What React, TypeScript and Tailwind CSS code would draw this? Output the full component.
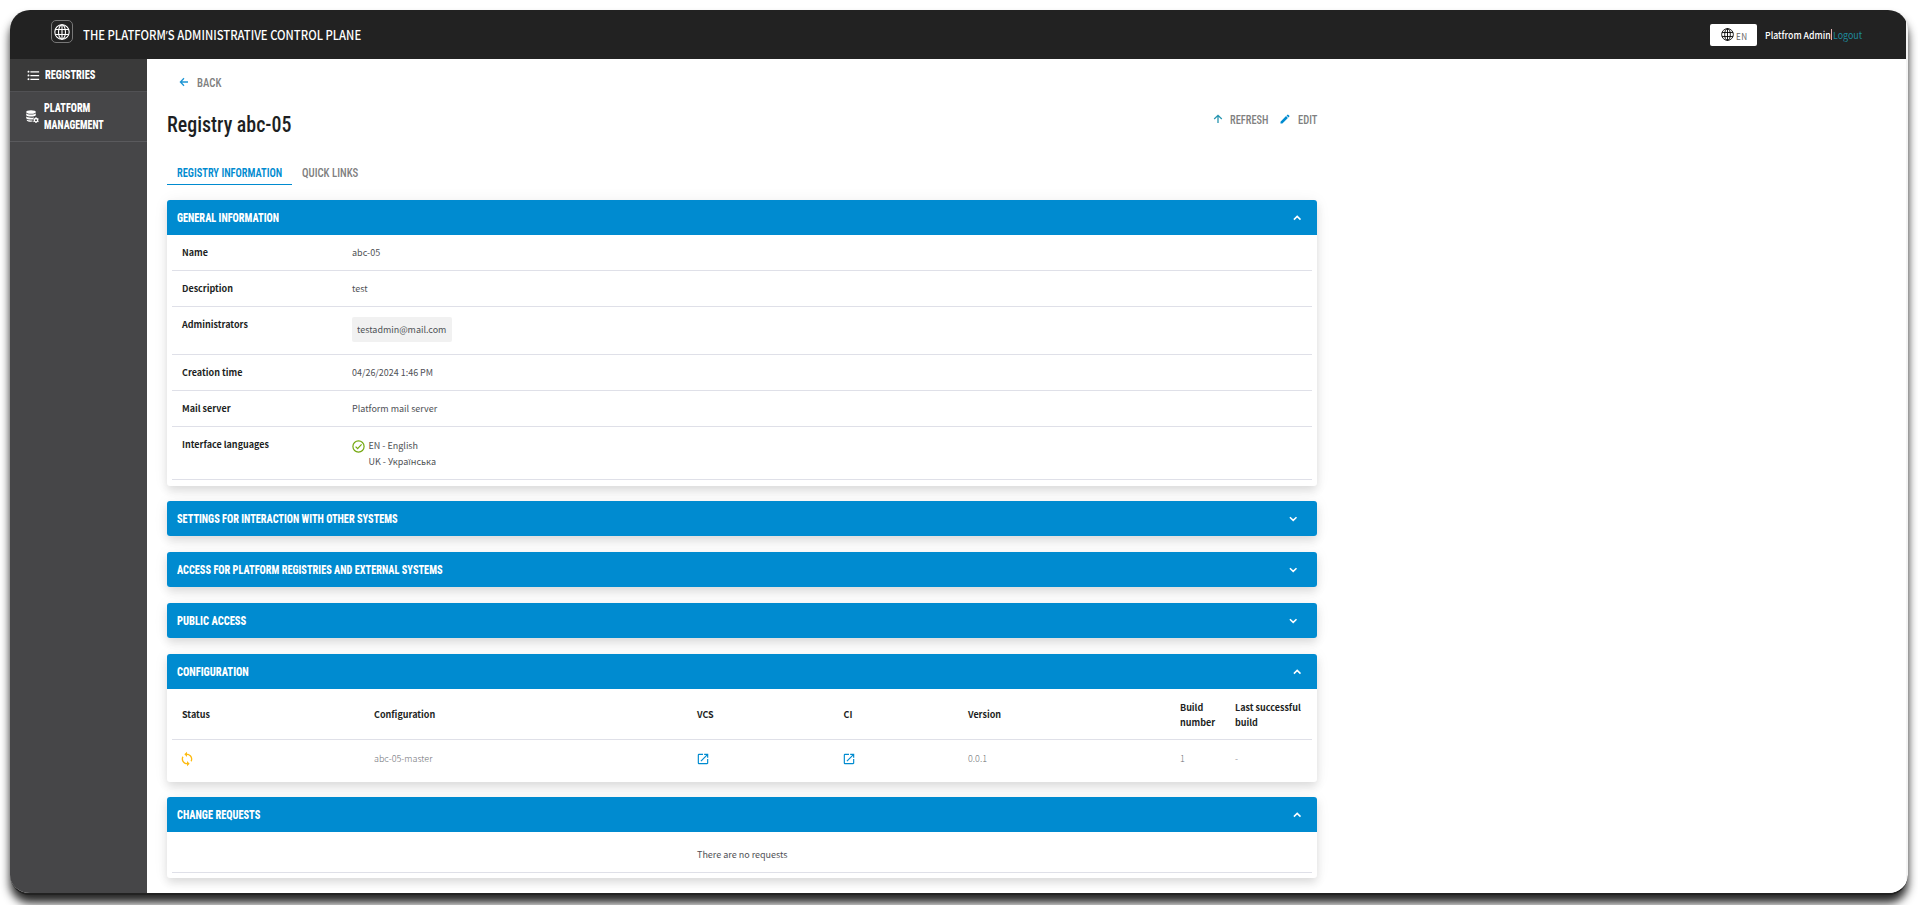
import { useLayoutEffect, useRef, useState, type ReactNode } from "react";
import { MdEdit, MdFormatListBulleted, MdOpenInNew, MdSync } from "react-icons/md";

/** Text condensed horizontally so that it occupies `w` pixels. */
function Narrow({ w, className = "", children }: { w: number; className?: string; children: ReactNode }) {
  const ref = useRef<HTMLSpanElement>(null);
  const [scale, setScale] = useState(1);
  useLayoutEffect(() => {
    if (ref.current) setScale(w / ref.current.offsetWidth);
  }, [w]);
  return (
    <span className={`block shrink-0 whitespace-nowrap ${className}`} style={{ width: w }}>
      <span ref={ref} className="inline-block origin-left" style={{ transform: `scaleX(${scale})` }}>
        {children}
      </span>
    </span>
  );
}

const oswald = "font-['Roboto_Condensed','Roboto',sans-serif]";

function Chevron({ up }: { up?: boolean }) {
  return (
    <svg width="12" height="12" viewBox="0 0 12 12" fill="none" stroke="white" strokeWidth="1.5">
      <path d={up ? "M2.900 7.600 6.200 4.400 9.500 7.600" : "M2.900 4.200 6.200 7.400 9.500 4.200"} />
    </svg>
  );
}

function Arrow({ className = "" }: { className?: string }) {
  return (
    <svg width="12" height="12" viewBox="0 0 12 12" fill="none" stroke="currentColor" strokeWidth="1.3" className={className}>
      <path d="M10 6H2.700M6 2.200 2.400 6 6 9.800" />
    </svg>
  );
}

function Panel({ title, w, open, children, className = "" }: {
  title: string;
  w: number;
  open?: boolean;
  children?: ReactNode;
  className?: string;
}) {
  return (
    <section className={`rounded-[3px] bg-white shadow-[0_5px_9px_rgba(0,0,0,0.11),0_1px_16px_rgba(0,0,0,0.06)] ${className}`}>
      <header
        className={`flex h-[35px] items-center justify-between bg-[#008bd0] pl-[10px] text-white ${
          open ? "rounded-t-[3px] pr-[14px]" : "rounded-[3px] pr-[18px]"
        }`}
      >
        <Narrow w={w} className={`${oswald} pb-px text-[13.500px] leading-[20px] font-extrabold`}>{title}</Narrow>
        <Chevron up={open} />
      </header>
      {children}
    </section>
  );
}

function InfoRow({ label, height, children }: { label: string; height: string; children: ReactNode }) {
  return (
    <div className={`flex border-b border-[#dfe0e8] pl-[10px] ${height}`}>
      <div className="w-[170px] pt-[10px] font-bold text-[#1d1f23]">{label}</div>
      <div className="pt-[10px] text-[#4f5156]">{children}</div>
    </div>
  );
}

function CheckCircle() {
  return (
    <svg width="13" height="13" viewBox="0 0 13 13" fill="none" stroke="#74a80f" strokeWidth="1.2">
      <circle cx="6.5" cy="6.5" r="5.6" />
      <path d="M3.6 6.7 5.6 8.7 9.6 4.4" />
    </svg>
  );
}

function Globe({ size, line }: { size: number; line: number }) {
  return (
    <svg width={size} height={size} viewBox="0 0 16 16" fill="none" stroke="currentColor" strokeWidth={line} className="shrink-0">
      <circle cx="8" cy="8" r="7.2" />
      <ellipse cx="8" cy="8" rx="3.500" ry="7.200" />
      <path d="M8 .8v14.400M1.300 5.500h13.400M1.300 10.500h13.400" />
    </svg>
  );
}

function DatabaseCog() {
  return (
    <svg width="13" height="13" viewBox="0 0 13 13" fill="white">
      <ellipse cx="5" cy="2" rx="4.8" ry="1.8" />
      <path d="M.2 3.2C1 4.9 9 4.9 9.8 3.2v2C9 7 1 7 .2 5.200z" />
      <path d="M.2 6.300C1 8 7 8 8.200 7.200L6.700 9.400C4 9.700 .8 9.400 .2 8.200z" />
      <path d="M.8 9.600C2 10.500 4.500 10.600 6.300 10.400L6.800 11.600C4 12 1.300 11.400 .8 10.500z" />
      <circle cx="10" cy="10.200" r="1.700" fill="none" stroke="white" strokeWidth="1.300" />
      <path d="M10 7.300v1M10 12v1M7.500 8.700l.9.500M11.600 11.200l.9.500M7.500 11.700l.9-.5M11.600 9.200l.9-.5" stroke="white" strokeWidth="1.100" />
    </svg>
  );
}

const grid = "grid grid-cols-[192px_323px_146.500px_124.500px_212px_55px_1fr] pl-[10px] items-center";

export default function App() {
  return (
    <div className="h-[905px] w-[1918px] overflow-hidden bg-white pt-[10px] pl-[10px] font-['Noto_Sans_CJK_SC',sans-serif] text-[9px] leading-[16px]">
      <div className="flex h-[885px] w-[1898px] flex-col overflow-hidden rounded-[20px] border-b-2 border-[#222] bg-[#f4f4f4] shadow-[0_8px_10px_rgba(0,0,0,0.85)]">
        <header className="flex h-[49px] w-[1896px] shrink-0 items-center bg-[#222] pr-[43px] text-white">
          <div className="mt-[-6px] ml-[41px] flex h-[23px] w-[22px] items-center justify-center rounded-[5px] border border-[#777]">
            <Globe size={16} line={1.1} />
          </div>
          <Narrow w={278} className="ml-[10px] pt-[2px] text-[12.500px] leading-[20px] font-medium">
            THE PLATFORM<span className="font-['Open_Sans',sans-serif]">’</span>S ADMINISTRATIVE CONTROL PLANE
          </Narrow>
          <div className="ml-auto flex h-[22px] w-[47px] items-center rounded-[2px] bg-white pl-[11px] text-black">
            <Globe size={13} line={1.1} />
            <Narrow w={11.5} className="ml-[2px] pt-[2px] text-[8.500px] tracking-[0.500px] text-[#666]">EN</Narrow>
          </div>
          <Narrow w={66} className="ml-[8px] pt-px text-[9.500px] font-medium">Platfrom Admin</Narrow>
          <span className="mr-px h-[11px] w-px bg-[#e6b0b0]" />
          <Narrow w={29} className="mr-px pt-px text-[9.500px] text-[#1f8a9e]">Logout</Narrow>
        </header>

        <div className="flex min-h-0 flex-1">
          <nav className={`flex w-[137px] shrink-0 flex-col bg-[#464648] text-[13.500px] leading-[17px] font-extrabold text-white ${oswald}`}>
            <div className="flex h-[33px] items-center border-b border-[#515154] bg-[#3a3a3a] pl-[16px]">
              <MdFormatListBulleted size={15} />
              <Narrow w={50.5} className="ml-[4px] pb-[2px]">REGISTRIES</Narrow>
            </div>
            <div className="flex h-[50px] items-center border-b border-[#5a5a5d] pl-[16px]">
              <DatabaseCog />
              <div className="ml-[5px] pb-px">
                <Narrow w={46}>PLATFORM</Narrow>
                <Narrow w={60}>MANAGEMENT</Narrow>
              </div>
            </div>
          </nav>

          <main className="flex w-[1759px] flex-col bg-white pl-[20px]">
            <div className={`mt-[13px] flex h-[20px] items-center pl-[11px] text-[13.500px] font-medium text-[#808080] ${oswald}`}>
              <Arrow className="text-[#1c95d4]" />
              <Narrow w={24} className="ml-[6.500px]">BACK</Narrow>
            </div>

            <div className={`mt-[12px] flex h-[40px] w-[1150px] justify-between ${oswald}`}>
              <h1 className="flex h-[40px] items-center pb-px text-[22.500px] leading-[30px] font-medium text-[#1d1f23]">
                <Narrow w={124}>Registry abc-05</Narrow>
              </h1>
              <div className="mt-[5px] flex h-[20px] items-center text-[13.500px] font-medium text-[#808080]">
                <Arrow className="rotate-90 text-[#2795b0]" />
                <Narrow w={38.5} className="ml-[6px] pb-px">REFRESH</Narrow>
                <MdEdit size={12} className="ml-[11px] text-[#008bd0]" />
                <Narrow w={19.5} className="ml-[6.500px] pb-px">EDIT</Narrow>
              </div>
            </div>

            <div className={`mt-[18px] flex h-[23px] text-[13.500px] leading-[20px] font-medium text-[#808080] ${oswald}`}>
              <div className="border-b border-[#008bd0] px-[10px] font-semibold text-[#008bd0]">
                <Narrow w={105}>REGISTRY INFORMATION</Narrow>
              </div>
              <Narrow w={56} className="ml-[10px]">QUICK LINKS</Narrow>
            </div>

            <div className="mt-[15px] flex w-[1150px] flex-col">
              <Panel title="GENERAL INFORMATION" w={102} open>
                <div className="px-[5px] pb-[6px]">
                  <InfoRow label="Name" height="h-[36px]">abc-05</InfoRow>
                  <InfoRow label="Description" height="h-[36px]">test</InfoRow>
                  <InfoRow label="Administrators" height="h-[48px]">
                    <div className="flex h-[25px] items-center rounded-[2px] bg-[#f1f1f1] px-[5px]">
                      <Narrow w={89.5}>testadmin@mail.com</Narrow>
                    </div>
                  </InfoRow>
                  <InfoRow label="Creation time" height="h-[36px]">
                    <Narrow w={81.5}>04/26/2024 1:46 PM</Narrow>
                  </InfoRow>
                  <InfoRow label="Mail server" height="h-[36px]">Platform mail server</InfoRow>
                  <InfoRow label="Interface languages" height="h-[53px]">
                    <div className="mt-[1px] flex items-center">
                      <span className="w-[16.500px]"><CheckCircle /></span>EN - English
                    </div>
                    <div className="pl-[16.500px]">UK - Українська</div>
                  </InfoRow>
                </div>
              </Panel>
              <Panel title="SETTINGS FOR INTERACTION WITH OTHER SYSTEMS" w={221} className="mt-[15px]" />
              <Panel title="ACCESS FOR PLATFORM REGISTRIES AND EXTERNAL SYSTEMS" w={265.5} className="mt-[16px]" />
              <Panel title="PUBLIC ACCESS" w={69.5} className="mt-[16px]" />
              <Panel title="CONFIGURATION" w={71.5} open className="mt-[16px]">
                <div className="px-[5px]">
                  <div className={`h-[51px] border-b border-[#dfe0e8] pt-px leading-[15px] font-bold text-[#1d1f23] ${grid}`}>
                    <span>Status</span>
                    <span>Configuration</span>
                    <span>VCS</span>
                    <span>CI</span>
                    <span>Version</span>
                    <span>Build<br />number</span>
                    <span>Last successful<br />build</span>
                  </div>
                  <div className={`h-[42px] pb-[4px] font-light text-[#6d6f75] ${grid}`}>
                    <MdSync size={16} className="-ml-[3px] text-[#fdbb11]" />
                    <span>abc-05-master</span>
                    <MdOpenInNew size={14} className="-ml-[1.500px] text-[#008bd0]" />
                    <MdOpenInNew size={14} className="-ml-[2px] text-[#008bd0]" />
                    <span>0.0.1</span>
                    <span>1</span>
                    <span>-</span>
                  </div>
                </div>
              </Panel>
              <Panel title="CHANGE REQUESTS" w={83.5} open className="mt-[15px]">
                <div className="px-[5px] pb-[5px]">
                  <div className="flex h-[41px] items-center border-b border-[#dfe0e8] pt-[5px] pl-[525px] text-[#4f5156]">
                    There are no requests
                  </div>
                </div>
              </Panel>
            </div>
          </main>
        </div>
      </div>
    </div>
  );
}
